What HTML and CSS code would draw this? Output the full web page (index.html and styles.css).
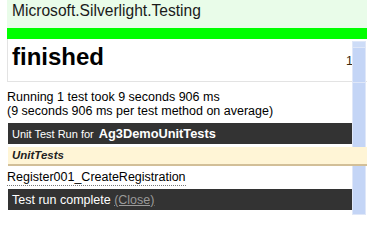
FILE: index.html
```
<!DOCTYPE html>
<html>
<head>
<meta charset="utf-8">
<link rel="stylesheet" href="styles.css">
</head>
<body>
<div class="page">
  <div class="header">Microsoft.Silverlight.Testing</div>
  <div class="progress"></div>
  <div class="status">
    <span class="status-title">finished</span>
    <span class="status-count">1</span>
  </div>
  <div class="summary">
    <div>Running 1 test took 9 seconds 906 ms</div>
    <div>(9 seconds 906 ms per test method on average)</div>
  </div>
  <div class="bar run-bar"><span class="run-label">Unit Test Run for</span><span class="run-name">Ag3DemoUnitTests</span></div>
  <div class="class-row">UnitTests</div>
  <div class="test-row"><span class="test-name">Register001_CreateRegistration</span></div>
  <div class="bar done-bar">Test run complete <span class="close-link">(Close)</span></div>
</div>
<div class="side-strip">
  <div class="strip-cell strip-top"></div>
  <div class="strip-cell strip-mid"></div>
  <div class="strip-cell strip-rest"></div>
</div>
</body>
</html>
```
FILE: styles.css
```
html, body {
  margin: 0;
  padding: 0;
  background: #ffffff;
  overflow: hidden;
}
body {
  font-family: "Liberation Sans", Arial, sans-serif;
  color: #000;
  width: 367px;
  height: 215px;
  position: relative;
}
.page {
  padding-left: 7px;
}
.header {
  height: 28px;
  background: #e9fce9;
  font-size: 15.6px;
  line-height: 21px;
  padding-left: 5px;
  color: #1a1a1a;
  box-sizing: border-box;
}
.progress {
  height: 11px;
  background: #00ff00;
}
.status {
  height: 43px;
  box-sizing: border-box;
  border-left: 1px solid #e3e3e3;
  border-bottom: 1px solid #e3e3e3;
  display: flex;
  justify-content: space-between;
  align-items: flex-start;
  padding: 4px 14px 0 4px;
}
.status-title {
  font-size: 24px;
  font-weight: bold;
  line-height: 28px;
}
.status-count {
  font-size: 12.5px;
  line-height: 14px;
  margin-top: 11px;
  color: #3a2a10;
}
.summary {
  font-size: 12.5px;
  line-height: 13.5px;
  padding-top: 9px;
}
.bar {
  background: #333333;
  color: #ffffff;
  height: 21px;
  margin-left: 1px;
  width: 344px;
  box-sizing: border-box;
  padding-left: 4px;
}
.run-bar {
  margin-top: 5px;
  line-height: 20px;
}
.run-label {
  font-size: 11px;
  margin-right: 5px;
}
.run-name {
  font-size: 12.8px;
  font-weight: bold;
}
.class-row {
  position: relative;
  z-index: 2;
  margin-top: 3px;
  margin-left: 1px;
  height: 19px;
  box-sizing: border-box;
  background: #fff5d6;
  border-bottom: 2px solid #d2bf98;
  font-size: 11.5px;
  font-weight: bold;
  font-style: italic;
  color: #222;
  line-height: 17px;
  padding-left: 4px;
}
.test-row {
  height: 23px;
  font-size: 12.5px;
  line-height: 22px;
}
.test-name {
  border-bottom: 1px dotted #777;
  padding-bottom: 1px;
}
.done-bar {
  font-size: 12.5px;
  line-height: 21px;
  padding-top: 1px;
}
.close-link {
  color: #9a9a9a;
  text-decoration: underline;
}
.side-strip {
  position: absolute;
  left: 352px;
  top: 41px;
  width: 14px;
  bottom: 0;
  z-index: 1;
  display: flex;
  flex-direction: column;
}
.strip-cell {
  background: #c4d5f6;
  border: 1px solid #dfe7f8;
  border-top: none;
}
.strip-top {
  height: 5px;
  background: #cddcf7;
  border-top: 1px solid #dfe7f8;
}
.strip-mid {
  height: 34px;
}
.strip-rest {
  flex: 1;
}
```
